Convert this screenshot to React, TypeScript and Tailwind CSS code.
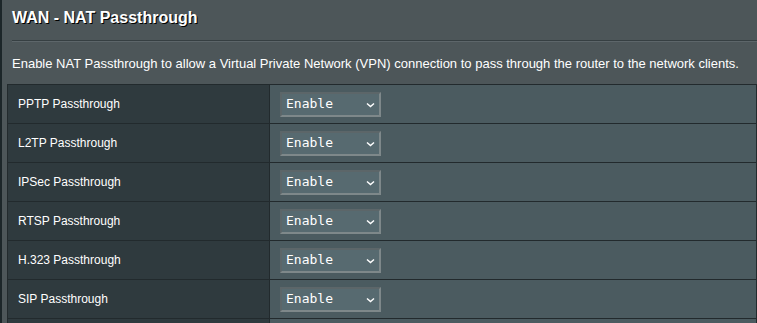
import React from "react";

const rows = [
  "PPTP Passthrough",
  "L2TP Passthrough",
  "IPSec Passthrough",
  "RTSP Passthrough",
  "H.323 Passthrough",
  "SIP Passthrough",
  "",
];

function Select({ value }: { value: string }) {
  return (
    <div className="flex h-[25px] w-[101px] items-center justify-between border-2 border-t-[#5c6669] border-l-[#5c6669] border-r-[#7e888a] border-b-[#7e888a] bg-[#576a70] pl-[4px] pr-[4px]">
      <span className="text-[13px] font-normal text-white" style={{ fontFamily: '"DejaVu Sans Mono", monospace' }}>
        {value}
      </span>
      <svg width="9" height="6" viewBox="0 0 9 6" className="mt-[1px]">
        <polyline points="1,1.5 4.5,4.5 8,1.5" fill="none" stroke="#ffffff" strokeWidth="1.5" />
      </svg>
    </div>
  );
}

export default function App() {
  return (
    <div className="h-[323px] w-[757px] overflow-hidden bg-[#1c2629]" style={{ fontFamily: '"Liberation Sans", Arial, sans-serif' }}>
      <div className="ml-[2px] h-full bg-[#4d5659] pl-[5px]">
        <div className="pl-[5px] pt-[8px]">
          <div className="h-[32px] text-[16px] font-bold leading-[20px] text-white [text-shadow:1px_1px_0_#000]">
            WAN - NAT Passthrough
          </div>
          <div className="h-[1px] bg-[#363f42]" />
          <div className="h-[1px] bg-[#5d666a]" />
          <div className="pt-[14px] text-[13px] leading-[16px] text-white">
            Enable NAT Passthrough to allow a Virtual Private Network (VPN) connection to pass through the router to the network clients.
          </div>
        </div>
        <div className="mt-[12px] border-l border-r border-t border-[#222a2d]">
          {rows.map((r, i) => (
            <div key={i} className="flex h-[39px] border-b border-[#222a2d]">
              <div className="flex w-[262px] items-center border-r border-[#222a2d] bg-[#2f3a3e] pl-[10px] text-[12px] text-white">
                {r}
              </div>
              <div className="flex flex-1 items-center bg-[#4b5b60] pl-[10px]">
                {r ? <Select value="Enable" /> : null}
              </div>
            </div>
          ))}
        </div>
      </div>
    </div>
  );
}
